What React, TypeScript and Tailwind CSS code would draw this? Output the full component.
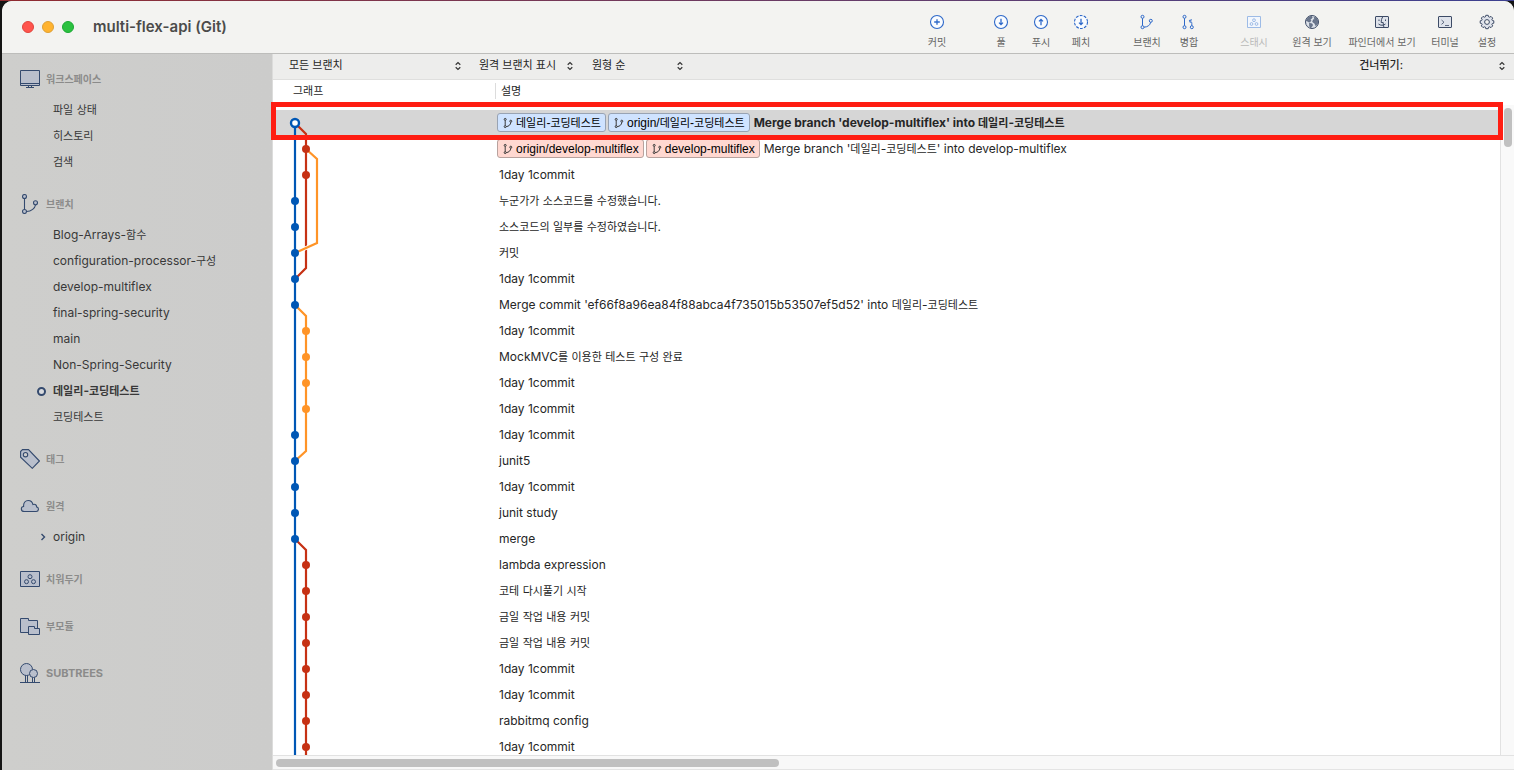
import React from 'react';

const BLUE = '#0057b5';
const RED = '#c63114';
const ORANGE = '#ff9427';
const NAVY = '#344a6e';
const FILL = '#b9bfcc';

const ROW = 26;

type Tag = { name: string; tone: 'blue' | 'red' };
type Commit = { message: string; tags?: Tag[]; lane: 0 | 1; color: string; head?: boolean };

const commits: Commit[] = [
  {
    message: "Merge branch 'develop-multiflex' into 데일리-코딩테스트",
    tags: [
      { name: '데일리-코딩테스트', tone: 'blue' },
      { name: 'origin/데일리-코딩테스트', tone: 'blue' },
    ],
    lane: 0,
    color: BLUE,
    head: true,
  },
  {
    message: "Merge branch '데일리-코딩테스트' into develop-multiflex",
    tags: [
      { name: 'origin/develop-multiflex', tone: 'red' },
      { name: 'develop-multiflex', tone: 'red' },
    ],
    lane: 1,
    color: RED,
  },
  { message: '1day 1commit', lane: 1, color: RED },
  { message: '누군가가 소스코드를 수정했습니다.', lane: 0, color: BLUE },
  { message: '소스코드의 일부를 수정하였습니다.', lane: 0, color: BLUE },
  { message: '커밋', lane: 0, color: BLUE },
  { message: '1day 1commit', lane: 0, color: BLUE },
  { message: "Merge commit 'ef66f8a96ea84f88abca4f735015b53507ef5d52' into 데일리-코딩테스트", lane: 0, color: BLUE },
  { message: '1day 1commit', lane: 1, color: ORANGE },
  { message: 'MockMVC를 이용한 테스트 구성 완료', lane: 1, color: ORANGE },
  { message: '1day 1commit', lane: 1, color: ORANGE },
  { message: '1day 1commit', lane: 1, color: ORANGE },
  { message: '1day 1commit', lane: 0, color: BLUE },
  { message: 'junit5', lane: 0, color: BLUE },
  { message: '1day 1commit', lane: 0, color: BLUE },
  { message: 'junit study', lane: 0, color: BLUE },
  { message: 'merge', lane: 0, color: BLUE },
  { message: 'lambda expression', lane: 1, color: RED },
  { message: '코테 다시풀기 시작', lane: 1, color: RED },
  { message: '금일 작업 내용 커밋', lane: 1, color: RED },
  { message: '금일 작업 내용 커밋', lane: 1, color: RED },
  { message: '1day 1commit', lane: 1, color: RED },
  { message: '1day 1commit', lane: 1, color: RED },
  { message: 'rabbitmq config', lane: 1, color: RED },
  { message: '1day 1commit', lane: 1, color: RED },
];

// Hangul glyphs run large next to Latin, so they get one size less
function Mixed({ text }: { text: string }) {
  return (
    <>
      {text.split(/([가-힣]+)/).map((part, i) =>
        i % 2 ? (
          <span key={i} className="text-[11px]">
            {part}
          </span>
        ) : (
          part
        ),
      )}
    </>
  );
}

/* ---------- icons ---------- */

function BranchGlyph({ className }: { className: string }) {
  return (
    <svg viewBox="0 0 10 12" className={className} fill="none" stroke="#3a3a3a" strokeWidth="1">
      <circle cx="2.2" cy="2.4" r="1" />
      <circle cx="2.2" cy="9.6" r="1" />
      <circle cx="7.8" cy="4.2" r="1" />
      <path d="M2.2 3.4V8.600M3.200 9.600C5.800 9.400 7.600 7.800 7.800 5.200" />
    </svg>
  );
}

function UpDown() {
  return (
    <svg viewBox="0 0 8 10" className="h-2.5 w-2 shrink-0" fill="none" stroke="#333" strokeWidth="1.2">
      <path d="M1.700 3.700 4 1.500l2.300 2.200M1.700 6.300 4 8.500l2.300-2.200" />
    </svg>
  );
}

const side = 'h-5 w-5 shrink-0';

const MonitorIcon = () => (
  <svg viewBox="0 0 20 20" className={side} fill={FILL} stroke={NAVY} strokeWidth="1">
    <path d="M.5 1.5h19v15H.5zM.5 14.5h19M8.500 16.500v2M11.500 16.500v2M6 18.500h8" />
  </svg>
);

const BranchIcon = () => (
  <svg viewBox="0 0 20 20" className={side} fill={FILL} stroke={NAVY} strokeWidth="1.1">
    <path d="M4.500 4.500v11M6.500 17.500C11.500 17.500 15 14 15.500 11" fill="none" />
    <circle cx="4.500" cy="2.500" r="2" />
    <circle cx="4.500" cy="17.500" r="2" />
    <circle cx="15.500" cy="8.700" r="2" />
  </svg>
);

const TagIcon = () => (
  <svg viewBox="0 0 20 20" className={side} fill={FILL} stroke={NAVY} strokeWidth="1.1">
    <path d="M.6 2.500 2.500.6H8.500L19.400 12 12.300 19.300.6 8.200z" />
    <circle cx="5.500" cy="5.700" r="2.200" fill="#cfcecd" />
  </svg>
);

const CloudIcon = () => (
  <svg viewBox="0 0 20 20" className={side} fill={FILL} stroke={NAVY} strokeWidth="1.1">
    <path d="M4.300 15.500C.5 15.500.5 10.800 3.600 10.500 3.300 6.500 5.500 4.500 8.200 4.500c2.600 0 4.200 1.500 4.700 4 2.500-.8 3.800.5 3.700 2.400 2.700.6 2.300 4.600-.4 4.600z" />
  </svg>
);

const StashIcon = () => (
  <svg viewBox="0 0 20 20" className={side} fill={FILL} stroke={NAVY} strokeWidth="1">
    <path d="M.5 2.500h19v15H.5z" />
    <circle cx="10" cy="7.700" r="2" />
    <circle cx="6.500" cy="12.700" r="2" />
    <circle cx="13.500" cy="12.700" r="2" />
  </svg>
);

const SubmoduleIcon = () => (
  <svg viewBox="0 0 20 20" className={side} fill={FILL} stroke={NAVY} strokeWidth="1">
    <path d="M.5 2.500h8v2h9v12H.5z" />
    <path d="M8.500 10.500h6v2h5v6h-11z" />
  </svg>
);

const TreesIcon = () => (
  <svg viewBox="0 0 20 20" className={side} fill={FILL} stroke={NAVY} strokeWidth="1">
    <path d="M5.500 12v7M7.500 12v7M12.500 14v5M14.500 14v5M0 19.500h20" />
    <circle cx="6.500" cy="6.500" r="6" />
    <circle cx="13.500" cy="10.500" r="4" />
  </svg>
);

const tool = 'h-4 w-4';

function CircleIcon({ d, dashed }: { d: string; dashed?: boolean }) {
  return (
    <svg viewBox="0 0 16 16" className={tool} fill="none" stroke="#2d68c9" strokeWidth="1.1">
      <circle cx="8" cy="8" r="6.500" fill="#fafcff" strokeDasharray={dashed ? '2.800 1.284' : undefined} />
      <path d={d} strokeWidth="1.300" />
    </svg>
  );
}

const toolIcons = {
  commit: <CircleIcon d="M8 5.200v5.600M5.200 8h5.600" />,
  pull: <CircleIcon d="M8 4.800v5.800M6 8.600l2 2 2-2" />,
  push: <CircleIcon d="M8 11.200V5.400M6 7.400l2-2 2 2" />,
  fetch: <CircleIcon d="M8 4.800v5.800M6 8.600l2 2 2-2" dashed />,
  branch: (
    <svg viewBox="0 0 16 16" className={tool} fill="none" stroke="#2d68c9" strokeWidth="1">
      <circle cx="3.500" cy="2.800" r="1.500" />
      <circle cx="3.500" cy="13.200" r="1.500" />
      <circle cx="11.800" cy="6.800" r="1.500" />
      <path d="M3.500 4.300v7.400M5 13.200c3.600-.2 6.200-2 6.600-4.900" />
    </svg>
  ),
  merge: (
    <svg viewBox="0 0 16 16" className={tool} fill="none" stroke="#2d68c9" strokeWidth="1">
      <circle cx="3.500" cy="2.800" r="1.500" />
      <circle cx="3.500" cy="13.200" r="1.500" />
      <circle cx="10.800" cy="13.200" r="1.500" />
      <path d="M3.500 4.300v7.400M10.800 11.700V9.500c0-1.500-.8-2.300-2-2.900M11 5.800 8.400 6.400l1 2.400" />
    </svg>
  ),
  stash: (
    <svg viewBox="0 0 16 16" className={tool} fill="#f3f7fd" stroke="#9dbbe6" strokeWidth="1">
      <path d="M1.500 2.500h13v11h-13z" />
      <circle cx="8" cy="6.200" r="1.400" />
      <circle cx="5.500" cy="10" r="1.400" />
      <circle cx="10.500" cy="10" r="1.400" />
    </svg>
  ),
  remote: (
    <svg viewBox="0 0 16 16" className={tool} fill="#dde2ea" stroke="#3d4b66" strokeWidth="1">
      <circle cx="8" cy="8" r="6.500" />
      <path
        d="M2 6.500 4.500 3.200 7.500 2l.8 1.800-2 1.700.8 1.500-2 1.200L3.500 7.200zM5.500 9l2.800.9.2 1.800-1.800 2.300-1.200-1.800zM10 3.200l2.300.6 1.600 3-.3 3.200-1.800 1.800-1.200-2.600-2-1.200.6-2.200 1.500-.6z"
        fill="#6a768d"
        strokeWidth=".4"
      />
    </svg>
  ),
  finder: (
    <svg viewBox="0 0 16 16" className={tool} fill="#dfe3eb" stroke="#3d4b66" strokeWidth="1">
      <rect x="1.500" y="2.500" width="13" height="11" rx=".5" />
      <path d="M9 2.500C7.500 4.500 7.200 6.500 7.200 8.500h2c0 2 .2 3.500.8 5M5 5.500V7M11.500 5.500V7M4.500 10c2 1.700 5 1.700 7 0" fill="none" />
    </svg>
  ),
  terminal: (
    <svg viewBox="0 0 16 16" className={tool} fill="#dfe3eb" stroke="#3d4b66" strokeWidth="1">
      <rect x="1.500" y="2.500" width="13" height="11" rx=".5" />
      <path d="M4.500 6 7 8.200l-2.500 2.200M8 11.500h4" fill="none" strokeWidth=".8" />
    </svg>
  ),
  settings: (
    <svg viewBox="0 0 16 16" className={tool} fill="#dfe3eb" stroke="#3d4b66" strokeWidth="1">
      <path d="M6.800 1.300h2.400l.4 1.500 1 .4 1.400-.8 1.700 1.700-.8 1.300.4 1 1.500.4v2.400l-1.500.4-.4 1 .8 1.300-1.700 1.700-1.400-.8-1 .4-.4 1.500H6.800l-.4-1.500-1-.4-1.400.8-1.700-1.700.8-1.300-.4-1-1.500-.4V6.800l1.500-.4.4-1-.8-1.300L4 2.400l1.400.8 1-.4z" />
      <circle cx="8" cy="8" r="2.400" fill="#f3f3f1" />
    </svg>
  ),
};

const tools = [
  { label: '커밋', icon: toolIcons.commit, box: 'w-10 mr-6' },
  { label: '풀', icon: toolIcons.pull, box: 'w-10' },
  { label: '푸시', icon: toolIcons.push, box: 'w-10' },
  { label: '페치', icon: toolIcons.fetch, box: 'w-10 mr-6' },
  { label: '브랜치', icon: toolIcons.branch, box: 'w-11' },
  { label: '병합', icon: toolIcons.merge, box: 'w-10 mr-4' },
  { label: '스태시', icon: toolIcons.stash, box: 'w-[58px]', disabled: true },
  { label: '원격 보기', icon: toolIcons.remote, box: 'w-[58px]' },
  { label: '파인더에서 보기', icon: toolIcons.finder, box: 'w-[82px]' },
  { label: '터미널', icon: toolIcons.terminal, box: 'w-11' },
  { label: '설정', icon: toolIcons.settings, box: 'w-10' },
];

const sections = [
  { title: '워크스페이스', icon: <MonitorIcon />, items: ['파일 상태', '히스토리', '검색'] },
  {
    title: '브랜치',
    icon: <BranchIcon />,
    items: [
      'Blog-Arrays-함수',
      'configuration-processor-구성',
      'develop-multiflex',
      'final-spring-security',
      'main',
      'Non-Spring-Security',
      '데일리-코딩테스트',
      '코딩테스트',
    ],
    current: '데일리-코딩테스트',
  },
  { title: '태그', icon: <TagIcon />, items: [] },
  { title: '원격', icon: <CloudIcon />, items: ['origin'], folded: true },
  { title: '치워두기', icon: <StashIcon />, items: [] },
  { title: '부모듈', icon: <SubmoduleIcon />, items: [] },
  { title: 'SUBTREES', icon: <TreesIcon />, items: [] },
];

/* ---------- parts ---------- */

function TitleBar() {
  return (
    <header className="flex h-[53px] shrink-0 items-center border-b border-[#bdbdbb] bg-[#f3f3f1] pr-[7px] pl-5">
      <div className="flex gap-2">
        <button aria-label="닫기" className="h-3 w-3 rounded-full border border-[#e0443e] bg-[#ff544d]" />
        <button aria-label="최소화" className="h-3 w-3 rounded-full border border-[#dea035] bg-[#ffb330]" />
        <button aria-label="확대" className="h-3 w-3 rounded-full border border-[#1aa934] bg-[#2bc140]" />
      </div>
      <h1 className="ml-[19px] text-[15px] font-semibold text-[#4b4b4a]">multi-flex-api (Git)</h1>
      <nav className="ml-auto flex pt-2.5">
        {tools.map((t) => (
          <button
            key={t.label}
            disabled={t.disabled}
            className={`flex flex-col items-center gap-1 whitespace-nowrap text-[#656564] disabled:text-[#b9b9b8] ${t.box}`}
          >
            {t.icon}
            <span className="text-[10px] leading-4">{t.label}</span>
          </button>
        ))}
      </nav>
    </header>
  );
}

function Sidebar() {
  return (
    <aside className="flex w-[271px] shrink-0 flex-col gap-[11px] border-r border-[#dcdcdb] bg-linear-to-r from-[#cececc] to-[#cccccb] pt-[7px] pl-[18px]">
      {sections.map((s) => (
        <section key={s.title}>
          <h2 className="flex h-9 items-center gap-1.5 text-[11px] font-bold text-[#8b8b8a]">
            {s.icon}
            {s.title === 'SUBTREES' ? s.title : <span className="text-[10px]">{s.title}</span>}
          </h2>
          <ul>
            {s.items.map((item) => (
              <li key={item} className="flex h-[26px] items-center text-xs text-[#383838]">
                <span className="flex w-[33px] shrink-0 justify-end pr-[7px]">
                  {item === s.current && (
                    <span className="h-[9px] w-[9px] rounded-full border-2 border-[#344a6e] bg-[#d8dade]" />
                  )}
                  {s.folded && (
                    <svg viewBox="0 0 6 8" className="h-2 w-1.5" fill="none" stroke={NAVY} strokeWidth="1.400">
                      <path d="M1.500 1 4.500 4l-3 3" />
                    </svg>
                  )}
                </span>
                <a href="#" className={item === s.current ? 'font-bold' : ''}>
                  <Mixed text={item} />
                </a>
              </li>
            ))}
          </ul>
        </section>
      ))}
    </aside>
  );
}

function Filter({ label, value, box }: { label: string; value: string; box: string }) {
  return (
    <div className={`flex items-center ${box}`}>
      <select aria-label={label} className="min-w-0 flex-1 appearance-none bg-transparent text-[11px] text-[#262626]">
        <option>{value}</option>
      </select>
      <UpDown />
    </div>
  );
}

function FilterBar() {
  return (
    <div className="flex h-[26px] shrink-0 items-center border-b border-[#dfdfde] bg-[#ededec] pr-2 pb-0.5 pl-4">
      <Filter label="브랜치" value="모든 브랜치" box="w-[173px] mr-[17px]" />
      <Filter label="원격 브랜치" value="원격 브랜치 표시" box="w-[95px] mr-[18px]" />
      <Filter label="정렬" value="원형 순" box="w-[92px]" />
      <label htmlFor="jump" className="ml-auto text-[11px] font-medium text-[#262626]">
        건너뛰기:
      </label>
      <div className="flex w-[103px] items-center">
        <select id="jump" className="min-w-0 flex-1 appearance-none bg-transparent text-[11px]">
          <option></option>
        </select>
        <UpDown />
      </div>
    </div>
  );
}

function Graph() {
  const end = commits.length * ROW;
  return (
    <svg width="60" height={end} className="absolute top-[30px] left-0" fill="none" strokeWidth="2.200">
      <path d="M22 13 33 24V158L22 169" stroke={RED} />
      <path d="M33 39 44 49V133L22 143" stroke="#fff" strokeWidth="4" />
      <path d="M33 39 44 49V133L22 143" stroke={ORANGE} />
      <path d="M22 195 33 206V341L22 351" stroke={ORANGE} />
      <path d={`M22 429 33 440V${end}`} stroke={RED} />
      <path d={`M22 13V${end}`} stroke={BLUE} />
      {commits.map((c, i) =>
        c.head ? (
          <circle key={i} cx="22" cy={13 + i * ROW} r="4" fill="#fff" stroke={c.color} strokeWidth="2.400" />
        ) : (
          <circle key={i} cx={c.lane ? 33 : 22} cy={13 + i * ROW} r="4" fill={c.color} />
        ),
      )}
    </svg>
  );
}

function RefTag({ name, tone }: Tag) {
  const color = tone === 'blue' ? 'bg-[#cfe3ff] border-[#98a3b3]' : 'bg-[#ffd8d1] border-[#b8a29e]';
  return (
    <span
      className={`flex h-[19px] items-center gap-0.5 rounded-[3px] border px-1 font-['Liberation_Sans','Noto_Sans_CJK_KR',sans-serif] text-xs font-normal text-black ${color}`}
    >
      <BranchGlyph className="h-3 w-3" />
      <span>
        <Mixed text={name} />
      </span>
    </span>
  );
}

function History() {
  return (
    <div className="relative min-h-0 flex-1 overflow-hidden bg-white">
      <table className="w-full table-fixed border-collapse text-left text-xs text-[#262626]">
        <thead>
          <tr className="h-[30px] align-top text-[11px]">
            <th className="w-[223px] pt-[3px] font-normal">
              <div className="h-4 border-r border-[#dcdcdc] pl-5 leading-4">그래프</div>
            </th>
            <th className="pt-[3px] pl-[5px] leading-4 font-normal">설명</th>
          </tr>
        </thead>
        <tbody>
          {commits.map((c, i) => (
            <tr key={i} className={c.head ? 'h-[26px] bg-[#d6d6d6] font-bold' : 'h-[26px]'}>
              <td className="p-0" />
              <td className="p-0">
                <div className={`flex h-[26px] items-center whitespace-nowrap ${c.tags ? 'gap-0.5 pb-px pl-px' : 'pl-[3px]'}`}>
                  {c.tags?.map((t) => <RefTag key={t.name} {...t} />)}
                  <span className={c.tags ? 'pl-0.5' : ''}>
                    <Mixed text={c.message} />
                  </span>
                </div>
              </td>
            </tr>
          ))}
        </tbody>
      </table>
      <Graph />
    </div>
  );
}

export default function App() {
  return (
    <div className="flex h-screen flex-col overflow-hidden bg-[#141414] font-['Inter','Noto_Sans_CJK_KR',sans-serif]">
      <div className="h-px shrink-0 bg-linear-to-r from-[#8f2a30] via-[#6b3a63] to-[#3c4090]" />
      <div className="ml-0.5 flex min-h-0 flex-1 flex-col overflow-hidden rounded-t-[10px] bg-[#f3f3f1]">
        <TitleBar />
        <div className="flex min-h-0 flex-1">
          <Sidebar />
          <main className="relative flex min-w-0 flex-1 flex-col border-b border-[#e4e4e4] bg-[#f8f8f8]">
            <FilterBar />
            <div className="flex min-h-0 flex-1">
              <History />
              <div className="flex w-3.5 shrink-0 flex-col bg-white pt-[25px]">
                <div className="flex-1 border-l border-[#e2e2e2] bg-[#f9f9f9] pt-[3px] pl-[3px]">
                  <div className="h-[39px] w-2 rounded-full bg-[#c0c0c0]" />
                </div>
              </div>
            </div>
            <div className="h-3.5 shrink-0 border-t border-[#e2e2e2] pt-[3px] pl-[3px]">
              <div className="h-2 w-13/32 rounded-full bg-[#c0c0c0]" />
            </div>
            {/* callout around the selected commit */}
            <div className="pointer-events-none absolute top-12 right-[11px] -left-0.5 h-[38px] border-5 border-[#ff1d12]" />
          </main>
        </div>
      </div>
    </div>
  );
}
